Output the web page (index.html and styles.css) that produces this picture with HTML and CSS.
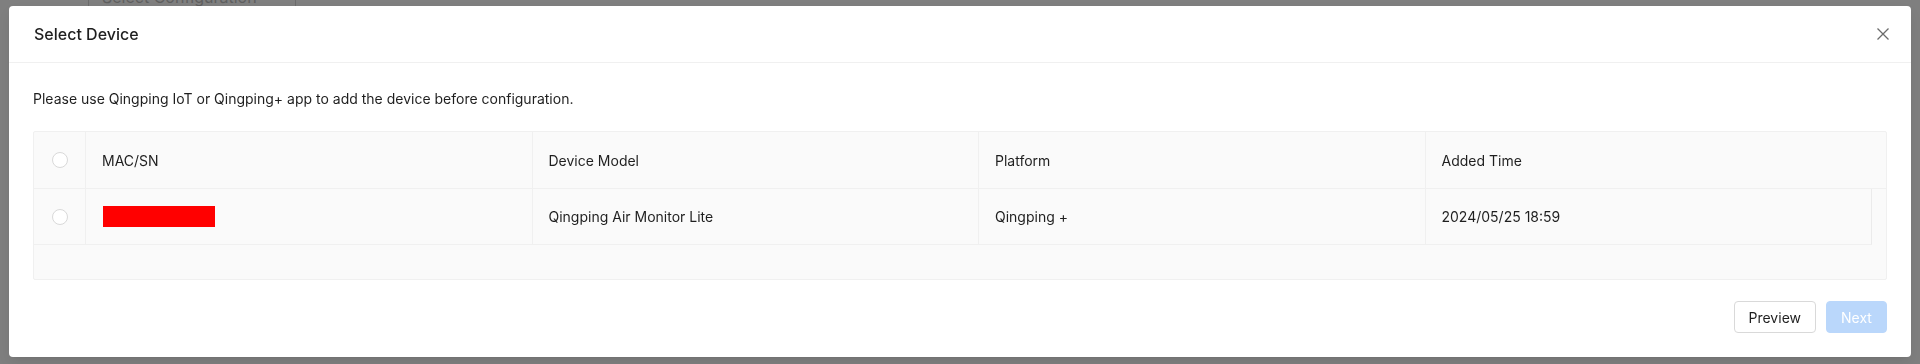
FILE: index.html
```html
<!DOCTYPE html>
<html lang="en">
<head>
<meta charset="utf-8">
<title>Select Device</title>
<link rel="stylesheet" href="styles.css">
</head>
<body>
<div class="page">
  <div class="select-wrap">
    <div class="select">
      <span class="placeholder">Select Configuration</span>
      <svg class="chev" width="12" height="12" viewBox="0 0 12 12"><path d="M2 4l4 4 4-4" fill="none" stroke="#bfbfbf" stroke-width="1.2"/></svg>
    </div>
  </div>
</div>
<div class="mask"></div>
<div class="modal-wrap">
  <div class="modal">
    <div class="modal-header">
      <div class="modal-title">Select Device</div>
      <button class="close" aria-label="Close">
        <svg width="14" height="14" viewBox="0 0 14 14"><path d="M1.5 1.5l11 11M12.5 1.5l-11 11" stroke="#6b6b6b" stroke-width="1.3" fill="none"/></svg>
      </button>
    </div>
    <div class="modal-body">
      <p class="desc">Please use Qingping IoT or Qingping+ app to add the device before configuration.</p>
      <div class="table">
        <div class="thead">
          <div class="th sel"><span class="radio"></span></div>
          <div class="th">MAC/SN</div>
          <div class="th">Device Model</div>
          <div class="th">Platform</div>
          <div class="th">Added Time</div>
          <div class="th gutter"></div>
        </div>
        <div class="tbody">
          <div class="row">
            <div class="td sel"><span class="radio"></span></div>
            <div class="td"><span class="redact"></span></div>
            <div class="td">Qingping Air Monitor Lite</div>
            <div class="td">Qingping +</div>
            <div class="td last">2024/05/25 18:59</div>
          </div>
          <div class="empty"></div>
        </div>
      </div>
    </div>
    <div class="modal-footer">
      <button class="btn">Preview</button>
      <button class="btn primary" disabled>Next</button>
    </div>
  </div>
</div>
</body>
</html>
```

FILE: styles.css
```css
* { box-sizing: border-box; }
html, body { margin: 0; padding: 0; }
body {
  width: 1920px;
  height: 364px;
  overflow: hidden;
  background: #ffffff;
  font-family: Inter, "Liberation Sans", Arial, sans-serif;
  font-size: 14px;
  color: #1f1f1f;
}
.page { height: 364px; }
.select-wrap {
  display: flex;
  padding-left: 88px;
  margin-top: -19px;
}
.select {
  width: 208px;
  height: 32px;
  border: 1px solid #d9d9d9;
  border-radius: 4px;
  display: flex;
  align-items: center;
  justify-content: space-between;
  padding: 0 12px 0 13px;
  background: #fff;
}
.placeholder { color: #bfbfbf; font-size: 16px; }
.mask {
  position: fixed;
  inset: 0;
  background: rgba(0, 0, 0, 0.5);
}
.modal-wrap {
  position: fixed;
  inset: 0;
  padding: 6px 9px 0 9px;
}
.modal {
  background: #fff;
  border-radius: 4px;
  box-shadow: 0 6px 16px rgba(0,0,0,0.08), 0 3px 6px -4px rgba(0,0,0,0.12);
  display: flex;
  flex-direction: column;
}
.modal-header {
  height: 57px;
  border-bottom: 1px solid #f0f0f0;
  display: flex;
  align-items: center;
  justify-content: space-between;
  padding: 0 0 0 25px;
}
.modal-title {
  font-size: 16px;
  font-weight: 500;
  line-height: 22px;
  color: #1f1f1f;
}
.close {
  width: 56px;
  height: 56px;
  border: 0;
  background: transparent;
  padding: 0;
  display: flex;
  align-items: center;
  justify-content: center;
}
.modal-body {
  padding: 25px 24px 0 24px;
}
.desc {
  margin: 0 0 21px 0;
  line-height: 22px;
  font-size: 14px;
  color: #1f1f1f;
}
.table {
  border: 1px solid #f0f0f0;
  border-radius: 2px;
  background: #fafafa;
}
.thead, .row {
  display: grid;
  grid-template-columns: 52px repeat(4, 1fr) 14px;
}
.th {
  height: 57px;
  border-bottom: 1px solid #f0f0f0;
  border-right: 1px solid #f0f0f0;
  display: flex;
  align-items: center;
  padding: 0 16px;
  font-weight: 400;
  color: #1f1f1f;
}
.th:nth-child(5), .th.gutter { border-right: 0; }
.th.gutter { padding: 0; }
.td {
  height: 56px;
  border-bottom: 1px solid #f0f0f0;
  border-right: 1px solid #f0f0f0;
  display: flex;
  align-items: center;
  padding: 0 16px;
  color: #1f1f1f;
}
.td.last { border-right: 1px solid #ebebeb; }
.sel { justify-content: center; padding: 0; }
.radio {
  width: 16px;
  height: 16px;
  border-radius: 50%;
  border: 1px solid #d9d9d9;
  background: #fff;
}
.redact {
  width: 112px;
  height: 21px;
  background: #ff0000;
  margin-left: 1px;
}
.empty { height: 34px; }
.modal-footer {
  display: flex;
  justify-content: flex-end;
  gap: 10px;
  padding: 21px 24px 24px 24px;
}
.btn {
  height: 32px;
  padding: 0 14px;
  border: 1px solid #d9d9d9;
  border-radius: 4px;
  background: #fff;
  font-family: inherit;
  font-size: 14px;
  color: #1f1f1f;
  min-width: 60px;
}
.btn.primary {
  min-width: 61px;
  background: #bad7fb;
  border-color: #bad7fb;
  color: #fff;
}
```
